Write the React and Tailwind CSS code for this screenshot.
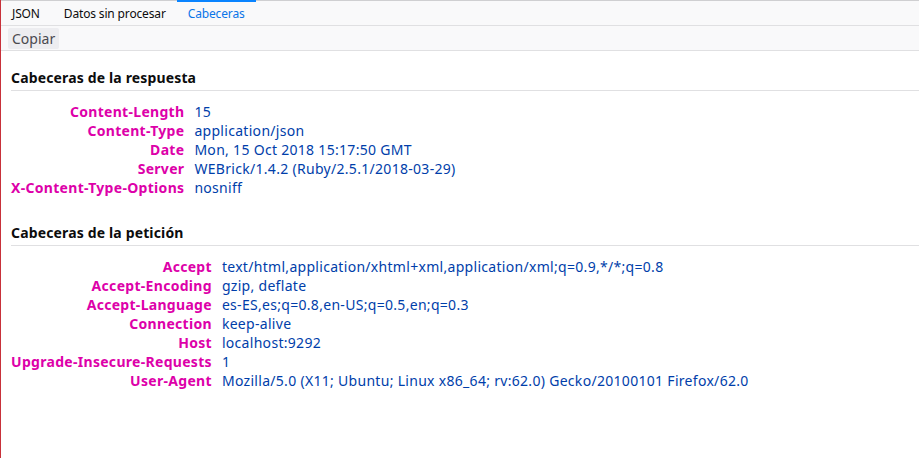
import React from 'react';

const responseHeaders = [
  ['Content-Length', '15'],
  ['Content-Type', 'application/json'],
  ['Date', 'Mon, 15 Oct 2018 15:17:50 GMT'],
  ['Server', 'WEBrick/1.4.2 (Ruby/2.5.1/2018-03-29)'],
  ['X-Content-Type-Options', 'nosniff'],
];

const requestHeaders = [
  ['Accept', 'text/html,application/xhtml+xml,application/xml;q=0.9,*/*;q=0.8'],
  ['Accept-Encoding', 'gzip, deflate'],
  ['Accept-Language', 'es-ES,es;q=0.8,en-US;q=0.5,en;q=0.3'],
  ['Connection', 'keep-alive'],
  ['Host', 'localhost:9292'],
  ['Upgrade-Insecure-Requests', '1'],
  ['User-Agent', 'Mozilla/5.0 (X11; Ubuntu; Linux x86_64; rv:62.0) Gecko/20100101 Firefox/62.0'],
];

function HeaderSection({ title, rows }) {
  return (
    <div>
      <h2 className="text-[14px] tracking-[0.15px] font-bold text-[#0c0c0d] leading-[18px] pt-[1px] pb-[3px] border-b border-[#e0e0e2] m-0">
        {title}
      </h2>
      <table className="mt-[11px] border-collapse text-[14px]">
        <tbody>
          {rows.map(([name, value]) => (
            <tr key={name} className="leading-[19px]">
              <td className="text-right font-bold tracking-[0.3px] text-[#dd00a9] pr-[10px] whitespace-nowrap p-0 align-top">
                {name}
              </td>
              <td className="text-[#003eaa] tracking-[0.3px] whitespace-nowrap p-0 align-top">{value}</td>
            </tr>
          ))}
        </tbody>
      </table>
    </div>
  );
}

export default function App() {
  const tabs = [
    { id: 'json', label: 'JSON', pad: 'pl-[11px] pr-[13px]' },
    { id: 'raw', label: 'Datos sin procesar', pad: 'px-[11px]' },
    { id: 'headers', label: 'Cabeceras', active: true, pad: 'px-[11px]' },
  ];

  return (
    <div
      className="h-[458px] w-full bg-white border-l border-[#c8313a] overflow-hidden text-[13px]"
      style={{ fontFamily: '"Noto Sans", "Open Sans", sans-serif' }}
    >
      {/* Tabs */}
      <div className="flex h-[26px] bg-[#f9f9fa] border-t border-[#cfcfd1] border-b border-b-[#e0e0e2]">
        {tabs.map((tab) => (
          <div
            key={tab.id}
            className={`${tab.pad} flex items-center text-[12px] tracking-[-0.15px] border-t-2 -mt-px ${
              tab.active ? 'border-[#0a84ff] text-[#0a75e8]' : 'border-transparent text-[#0c0c0d]'
            }`}
          >
            {tab.label}
          </div>
        ))}
      </div>

      {/* Toolbar */}
      <div className="h-[25px] bg-[#f9f9fa] border-b border-[#e0e0e2] flex items-center px-[7px]">
        <button className="h-[21px] px-[4px] bg-[#ededf0] rounded-[2px] text-[14px] text-[#4a4a4f] leading-[21px]">
          Copiar
        </button>
      </div>

      {/* Content */}
      <div className="pl-[10px] pt-[17px] flex flex-col gap-[26px]">
        <HeaderSection title="Cabeceras de la respuesta" rows={responseHeaders} />
        <HeaderSection title="Cabeceras de la petición" rows={requestHeaders} />
      </div>
    </div>
  );
}
